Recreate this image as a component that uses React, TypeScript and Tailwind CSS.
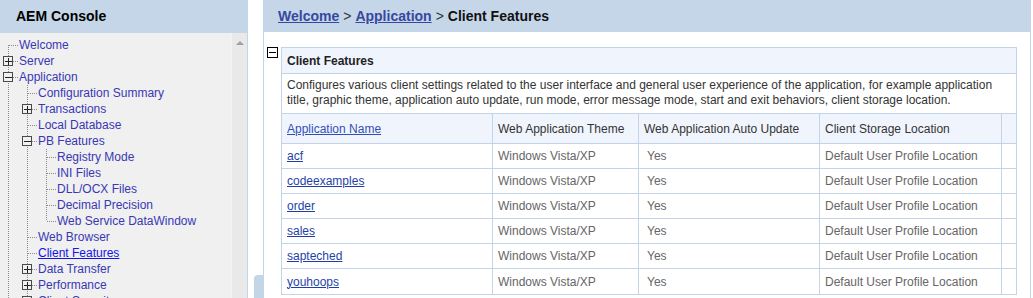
import React from "react";

type Conn = "first" | "mid" | "last";
type Row = {
  label: string;
  guides: boolean[];
  conn: Conn;
  box?: "plus" | "minus";
  active?: boolean;
};

const ROWS: Row[] = [
  { label: "Welcome", guides: [], conn: "first" },
  { label: "Server", guides: [], conn: "mid", box: "plus" },
  { label: "Application", guides: [], conn: "mid", box: "minus" },
  { label: "Configuration Summary", guides: [true], conn: "mid" },
  { label: "Transactions", guides: [true], conn: "mid", box: "plus" },
  { label: "Local Database", guides: [true], conn: "mid" },
  { label: "PB Features", guides: [true], conn: "mid", box: "minus" },
  { label: "Registry Mode", guides: [true, true], conn: "mid" },
  { label: "INI Files", guides: [true, true], conn: "mid" },
  { label: "DLL/OCX Files", guides: [true, true], conn: "mid" },
  { label: "Decimal Precision", guides: [true, true], conn: "mid" },
  { label: "Web Service DataWindow", guides: [true, true], conn: "last" },
  { label: "Web Browser", guides: [true], conn: "mid" },
  { label: "Client Features", guides: [true], conn: "mid", active: true },
  { label: "Data Transfer", guides: [true], conn: "mid", box: "plus" },
  { label: "Performance", guides: [true], conn: "mid", box: "plus" },
  { label: "Client Security", guides: [true], conn: "mid", box: "plus" },
];

const DOT = "#8a8a8a";

function Guide({ on }: { on: boolean }) {
  return (
    <svg width="19" height="16" className="shrink-0 block" shapeRendering="crispEdges">
      {on && <line x1="8.5" y1="0" x2="8.5" y2="16" stroke={DOT} strokeDasharray="1 1" />}
    </svg>
  );
}

function Connector({ conn, box }: { conn: Conn; box?: "plus" | "minus" }) {
  const y1 = conn === "first" ? 8 : 0;
  const y2 = conn === "last" ? 8 : 16;
  return (
    <svg width="19" height="16" className="shrink-0 block" shapeRendering="crispEdges">
      <line x1="8.5" y1={y1} x2="8.5" y2={y2} stroke={DOT} strokeDasharray="1 1" />
      <line x1="9" y1="8.5" x2="20" y2="8.5" stroke={DOT} strokeDasharray="1 1" />
      {box && (
        <g>
          <rect x="3.5" y="3.5" width="9" height="9" fill="#f0f0f0" stroke="#4a4a4a" />
          <line x1="5" y1="8.5" x2="12" y2="8.5" stroke="#222" />
          {box === "plus" && <line x1="8.5" y1="5" x2="8.5" y2="12" stroke="#222" />}
        </g>
      )}
    </svg>
  );
}

const DATA = ["acf", "codeexamples", "order", "sales", "sapteched", "youhoops"];

export default function App() {
  return (
    <div
      className="w-[1033px] h-[298px] overflow-hidden bg-white flex text-[12px]"
      style={{ fontFamily: '"Liberation Sans", Arial, sans-serif' }}
    >
      {/* Sidebar */}
      <aside className="w-[248px] shrink-0 flex flex-col border-r border-[#c5d5e8] bg-[#f0f0f0]">
        <div className="h-[33px] shrink-0 bg-[#c5d6e8] flex items-center pl-4 text-[14px] font-bold text-black">
          AEM Console
        </div>
        <div className="flex flex-1 min-h-0">
          <div className="flex-1 pt-[4px] overflow-hidden">
            {ROWS.map((r) => (
              <div key={r.label} className="flex h-[16px] items-center whitespace-nowrap">
                {r.guides.map((g, i) => (
                  <Guide key={i} on={g} />
                ))}
                <Connector conn={r.conn} box={r.box} />
                <span
                  className={
                    r.active
                      ? "text-[#1414e6] underline leading-[16px]"
                      : "text-[#3838b4] leading-[16px]"
                  }
                >
                  {r.label}
                </span>
              </div>
            ))}
          </div>
          <div className="w-[16px] shrink-0 bg-[#e9e9e9] border-l border-[#f3f3f3] flex justify-center pt-[7px]">
            <svg width="8" height="5" className="block">
              <polygon points="0,5 8,5 4,1" fill="#a0a0a0" />
            </svg>
          </div>
        </div>
      </aside>

      {/* Splitter gap */}
      <div className="w-[15px] shrink-0 flex flex-col justify-end pl-[6px]">
        <div className="h-[23px] w-[9px] bg-[#c5d5e8] rounded-tl-[4px]" />
      </div>

      {/* Main */}
      <main className="w-[768px] shrink-0 flex flex-col border-x border-[#c5d5e8]">
        <div className="h-[32px] shrink-0 bg-[#c5d6e8] flex items-center pl-[14px] text-[14px]">
          <a className="font-bold text-[#3548a0] underline">Welcome</a>
          <span className="text-[#333] mx-[4px]">&gt;</span>
          <a className="font-bold text-[#3548a0] underline">Application</a>
          <span className="text-[#333] mx-[4px]">&gt;</span>
          <span className="font-bold text-[#111]">Client Features</span>
        </div>
        <div className="flex pt-[15px] pl-[3px] gap-[3px]">
          <div className="w-[11px] h-[11px] shrink-0 border border-black flex items-center justify-center">
            <div className="w-[7px] h-px bg-black" />
          </div>
          <section className="w-[736px] border border-[#c3d3e8]">
            <div className="h-[26px] bg-[#f0f5fd] border-b border-[#c3d3e8] flex items-center pl-[5px] font-bold text-[#222]">
              Client Features
            </div>
            <div className="h-[40px] border-b border-[#c3d3e8] pl-[5px] pt-[4px] leading-[15px] text-[#333] whitespace-nowrap">
              Configures various client settings related to the user interface and general user experience of the application, for example application
              <br />
              title, graphic theme, application auto update, run mode, error message mode, start and exit behaviors, client storage location.
            </div>
            <div className="grid grid-cols-[211px_146px_181px_182px_14px]">
              <div className="h-[30px] bg-[#f0f5fd] border-r border-b border-[#c3d3e8] flex items-center pl-[5px]">
                <a className="text-[#3050b8] underline">Application Name</a>
              </div>
              <div className="h-[30px] bg-[#f0f5fd] border-r border-b border-[#c3d3e8] flex items-center pl-[5px] text-[#333]">
                Web Application Theme
              </div>
              <div className="h-[30px] bg-[#f0f5fd] border-r border-b border-[#c3d3e8] flex items-center pl-[5px] text-[#333]">
                Web Application Auto Update
              </div>
              <div className="h-[30px] bg-[#f0f5fd] border-r border-b border-[#c3d3e8] flex items-center pl-[5px] text-[#333]">
                Client Storage Location
              </div>
              <div className="h-[30px] bg-[#f0f5fd] border-b border-[#c3d3e8]" />
              {DATA.map((name, i) => {
                const last = i === DATA.length - 1;
                const b = last ? "" : "border-b";
                return (
                  <React.Fragment key={name}>
                    <div className={`h-[25px] ${b} border-r border-[#c3d3e8] flex items-center pl-[5px]`}>
                      <a className="text-[#1f3fa8] underline">{name}</a>
                    </div>
                    <div className={`h-[25px] ${b} border-r border-[#c3d3e8] flex items-center pl-[5px] text-[#666]`}>
                      Windows Vista/XP
                    </div>
                    <div className={`h-[25px] ${b} border-r border-[#c3d3e8] flex items-center pl-[8px] text-[#666]`}>
                      Yes
                    </div>
                    <div className={`h-[25px] ${b} border-r border-[#c3d3e8] flex items-center pl-[5px] text-[#666]`}>
                      Default User Profile Location
                    </div>
                    <div className={`h-[25px] ${b} border-[#c3d3e8]`} />
                  </React.Fragment>
                );
              })}
            </div>
          </section>
        </div>
      </main>
    </div>
  );
}
